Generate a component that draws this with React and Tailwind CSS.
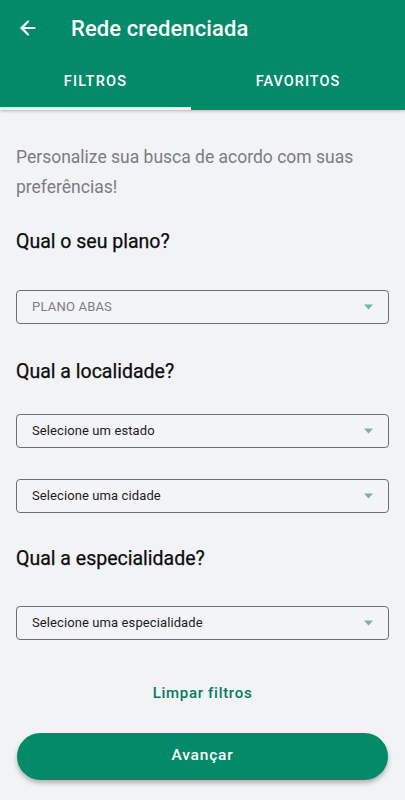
import { ArrowLeft } from "lucide-react";

function Select({ label, muted }) {
  return (
    <div className="flex h-[34px] items-center justify-between rounded-[4px] border border-[#6b6e72] bg-[#f3f4f6] pl-[15px] pr-[15px]">
      <span
        className={
          muted
            ? "text-[13px] tracking-[0.2px] text-[#7b7e82]"
            : "text-[13px] tracking-[0.1px] text-[#1b1c1e]"
        }
      >
        {label}
      </span>
      <svg width="9" height="6" viewBox="0 0 9 6">
        <path d="M0 0.5 L9 0.5 L4.5 5.5 Z" fill="#6fb89f" />
      </svg>
    </div>
  );
}

export default function App() {
  return (
    <div
      className="flex min-h-[800px] w-full flex-col bg-[#f2f3f5]"
      style={{ fontFamily: "Roboto, 'Noto Sans', sans-serif" }}
    >
      {/* header */}
      <header className="bg-[#028a69] text-white shadow-[0_1px_3px_rgba(0,0,0,0.25)]">
        <div className="flex h-[56px] items-center">
          <button className="ml-[16px] flex h-6 w-6 items-center justify-center">
            <ArrowLeft className="h-[22px] w-[22px]" strokeWidth={2.4} />
          </button>
          <h1 className="ml-[31px] text-[22px] font-medium tracking-[0.1px]">Rede credenciada</h1>
        </div>
        <nav className="grid h-[54px] grid-cols-[191px_1fr]">
          <div className="flex flex-col">
            <span className="flex flex-1 items-center justify-center pt-[1px] text-[14.5px] font-medium tracking-[1.2px]">
              FILTROS
            </span>
            <div className="h-[3px] bg-[#eaf6f3]" />
          </div>
          <div className="flex flex-col">
            <span className="flex flex-1 items-center justify-center pt-[1px] text-[14.5px] font-medium tracking-[1px]">
              FAVORITOS
            </span>
            <div className="h-[3px]" />
          </div>
        </nav>
      </header>

      <main className="flex flex-1 flex-col px-4 pt-[32px]">
        <p className="text-[17.5px] leading-[30px] text-[#7a7d81]">
          Personalize sua busca de acordo com suas preferências!
        </p>

        <h2 className="mt-[26px] text-[19.5px] leading-[28px] text-[#0b0c0e] [-webkit-text-stroke:0.25px_#0b0c0e]">Qual o seu plano?</h2>
        <div className="mt-[34px]">
          <Select label="PLANO ABAS" muted />
        </div>

        <h2 className="mt-[34px] text-[19.5px] leading-[28px] text-[#0b0c0e] [-webkit-text-stroke:0.25px_#0b0c0e]">Qual a localidade?</h2>
        <div className="mt-[28px] flex flex-col gap-[31px]">
          <Select label="Selecione um estado" />
          <Select label="Selecione uma cidade" />
        </div>

        <h2 className="mt-[32px] text-[19.5px] leading-[28px] text-[#0b0c0e] [-webkit-text-stroke:0.25px_#0b0c0e]">Qual a especialidade?</h2>
        <div className="mt-[33px]">
          <Select label="Selecione uma especialidade" />
        </div>

        <button className="mt-[42px] self-center text-[15px] font-medium tracking-[0.7px] text-[#097a5f]">
          Limpar filtros
        </button>

        <button className="mx-[1px] mt-[28px] h-[47px] rounded-full bg-[#028a69] text-[15.5px] font-medium tracking-[0.8px] text-white shadow-[0_3px_5px_rgba(0,0,0,0.28)]">
          Avançar
        </button>
      </main>
    </div>
  );
}
